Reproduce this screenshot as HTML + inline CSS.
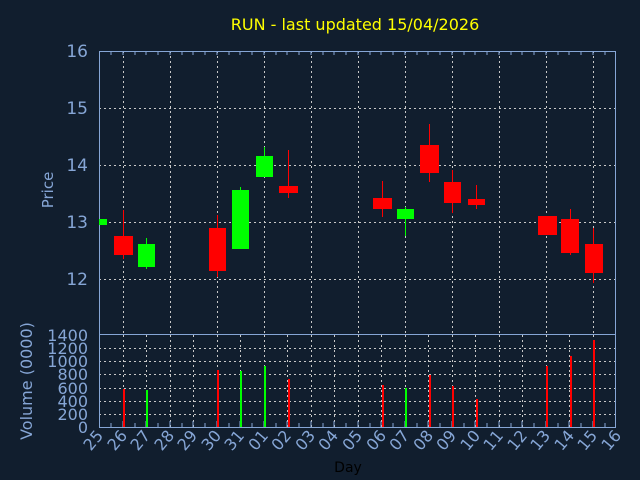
<!DOCTYPE html><html><head><style>body{margin:0;background:#111e2e}svg{display:block}</style></head><body>
<svg width="640" height="480" xmlns="http://www.w3.org/2000/svg" font-family="DejaVu Sans, Liberation Sans, sans-serif">
<rect width="640" height="480" fill="#111e2e"/>
<text x="355" y="30" fill="#ffff00" font-size="16" text-anchor="middle">RUN - last updated 15/04/2026</text>
<g stroke="#c8c8c8" stroke-dasharray="2,3" stroke-width="1">
<line x1="99" y1="108.5" x2="616" y2="108.5"/><line x1="99" y1="165.5" x2="616" y2="165.5"/><line x1="99" y1="222.5" x2="616" y2="222.5"/><line x1="99" y1="279.5" x2="616" y2="279.5"/>
<line x1="99" y1="414.5" x2="616" y2="414.5"/><line x1="99" y1="401.5" x2="616" y2="401.5"/><line x1="99" y1="388.5" x2="616" y2="388.5"/><line x1="99" y1="374.5" x2="616" y2="374.5"/><line x1="99" y1="361.5" x2="616" y2="361.5"/><line x1="99" y1="348.5" x2="616" y2="348.5"/>
<path d="M123.5 51V334M170.5 51V334M217.5 51V334M264.5 51V334M311.5 51V334M358.5 51V334M405.5 51V334M452.5 51V334M499.5 51V334M546.5 51V334M593.5 51V334"/>
<path d="M123.5 335V427M146.5 335V427M170.5 335V427M193.5 335V427M217.5 335V427M240.5 335V427M264.5 335V427M287.5 335V427M311.5 335V427M334.5 335V427M358.5 335V427M381.5 335V427M405.5 335V427M428.5 335V427M452.5 335V427M475.5 335V427M499.5 335V427M522.5 335V427M546.5 335V427M569.5 335V427M593.5 335V427"/>
</g>
<g stroke="#86a6d6" fill="none"><rect x="99.5" y="51.5" width="516" height="376"/><line x1="99" y1="334.5" x2="616" y2="334.5"/>
<path d="M111 51v4M123 51v4M135 51v4M146 51v4M158 51v4M170 51v4M182 51v4M193 51v4M205 51v4M217 51v4M229 51v4M240 51v4M252 51v4M264 51v4M276 51v4M287 51v4M299 51v4M311 51v4M323 51v4M334 51v4M346 51v4M358 51v4M370 51v4M381 51v4M393 51v4M405 51v4M417 51v4M428 51v4M440 51v4M452 51v4M464 51v4M475 51v4M487 51v4M499 51v4M511 51v4M522 51v4M534 51v4M546 51v4M558 51v4M569 51v4M581 51v4M593 51v4M605 51v4"/>
<path d="M111 427v-4M123 427v-6M135 427v-4M146 427v-6M158 427v-4M170 427v-6M182 427v-4M193 427v-6M205 427v-4M217 427v-6M229 427v-4M240 427v-6M252 427v-4M264 427v-6M276 427v-4M287 427v-6M299 427v-4M311 427v-6M323 427v-4M334 427v-6M346 427v-4M358 427v-6M370 427v-4M381 427v-6M393 427v-4M405 427v-6M417 427v-4M428 427v-6M440 427v-4M452 427v-6M464 427v-4M475 427v-6M487 427v-4M499 427v-6M511 427v-4M522 427v-6M534 427v-4M546 427v-6M558 427v-4M569 427v-6M581 427v-4M593 427v-6M605 427v-4"/>
</g>
<g fill="#ff0000" stroke="#ff0000">
<line x1="123.5" y1="210" x2="123.5" y2="259"/><rect x="114" y="236" width="19" height="19" stroke="none"/>
<line x1="217.5" y1="215" x2="217.5" y2="277"/><rect x="209" y="228" width="17" height="43" stroke="none"/>
<line x1="288.5" y1="150" x2="288.5" y2="198"/><rect x="279" y="186" width="19" height="7" stroke="none"/>
<line x1="382.5" y1="181" x2="382.5" y2="217"/><rect x="373" y="198" width="19" height="11" stroke="none"/>
<line x1="429.5" y1="124" x2="429.5" y2="182"/><rect x="420" y="145" width="19" height="28" stroke="none"/>
<line x1="452.5" y1="170" x2="452.5" y2="213"/><rect x="444" y="182" width="17" height="21" stroke="none"/>
<line x1="476.5" y1="185" x2="476.5" y2="209"/><rect x="468" y="199" width="17" height="6" stroke="none"/>
<rect x="538" y="216" width="19" height="19" stroke="none"/>
<line x1="570.5" y1="209" x2="570.5" y2="255"/><rect x="561" y="219" width="18" height="34" stroke="none"/>
<line x1="593.5" y1="228" x2="593.5" y2="283"/><rect x="585" y="244" width="18" height="29" stroke="none"/>
</g>
<g fill="#00ff00" stroke="#00ff00">
<rect x="99" y="219" width="8" height="6" stroke="none"/>
<line x1="146.5" y1="238" x2="146.5" y2="269"/><rect x="138" y="244" width="17" height="23" stroke="none"/>
<line x1="240.5" y1="187" x2="240.5" y2="190"/><rect x="232" y="190" width="17" height="59" stroke="none"/>
<line x1="264.5" y1="147" x2="264.5" y2="156"/><rect x="256" y="156" width="17" height="21" stroke="none"/>
<line x1="405.5" y1="207" x2="405.5" y2="236"/><rect x="397" y="209" width="17" height="10" stroke="none"/>
</g>
<g fill="#ff0000"><rect x="123" y="389" width="2" height="38"/><rect x="217" y="370" width="2" height="57"/><rect x="288" y="379" width="2" height="48"/><rect x="382" y="385" width="2" height="42"/><rect x="429" y="375" width="2" height="52"/><rect x="452" y="386" width="2" height="41"/><rect x="476" y="399" width="2" height="28"/><rect x="546" y="366" width="2" height="61"/><rect x="570" y="356" width="2" height="71"/><rect x="593" y="340" width="2" height="87"/></g>
<g fill="#00ff00"><rect x="146" y="390" width="2" height="37"/><rect x="240" y="371" width="2" height="56"/><rect x="264" y="366" width="2" height="61"/><rect x="405" y="388" width="2" height="39"/></g>
<g fill="#86a6d6" font-size="17" text-anchor="end">
<text x="88" y="57">16</text><text x="88" y="114">15</text><text x="88" y="171">14</text><text x="88" y="228">13</text><text x="88" y="285">12</text>
</g>
<g fill="#86a6d6" font-size="16" text-anchor="end">
<text x="88" y="341">1400</text><text x="88" y="354">1200</text><text x="88" y="367">1000</text><text x="88" y="380">800</text><text x="88" y="394">600</text><text x="88" y="407">400</text><text x="88" y="420">200</text><text x="88" y="433">0</text>
</g>
<text transform="translate(53,190) rotate(-90)" fill="#86a6d6" font-size="15" text-anchor="middle">Price</text>
<text transform="translate(32,381) rotate(-90)" fill="#86a6d6" font-size="16" text-anchor="middle">Volume (0000)</text>
<text x="348" y="472" fill="#000" font-size="14" text-anchor="middle">Day</text>
<g fill="#86a6d6" font-size="16" text-anchor="end">
<text transform="translate(104,436) rotate(-50)">25</text><text transform="translate(128,436) rotate(-50)">26</text><text transform="translate(151,436) rotate(-50)">27</text><text transform="translate(175,436) rotate(-50)">28</text><text transform="translate(198,436) rotate(-50)">29</text><text transform="translate(222,436) rotate(-50)">30</text><text transform="translate(245,436) rotate(-50)">31</text><text transform="translate(269,436) rotate(-50)">01</text><text transform="translate(292,436) rotate(-50)">02</text><text transform="translate(316,436) rotate(-50)">03</text><text transform="translate(339,436) rotate(-50)">04</text><text transform="translate(363,436) rotate(-50)">05</text><text transform="translate(387,436) rotate(-50)">06</text><text transform="translate(410,436) rotate(-50)">07</text><text transform="translate(434,436) rotate(-50)">08</text><text transform="translate(457,436) rotate(-50)">09</text><text transform="translate(481,436) rotate(-50)">10</text><text transform="translate(504,436) rotate(-50)">11</text><text transform="translate(528,436) rotate(-50)">12</text><text transform="translate(551,436) rotate(-50)">13</text><text transform="translate(575,436) rotate(-50)">14</text><text transform="translate(598,436) rotate(-50)">15</text><text transform="translate(622,436) rotate(-50)">16</text>
</g>
</svg></body></html>
